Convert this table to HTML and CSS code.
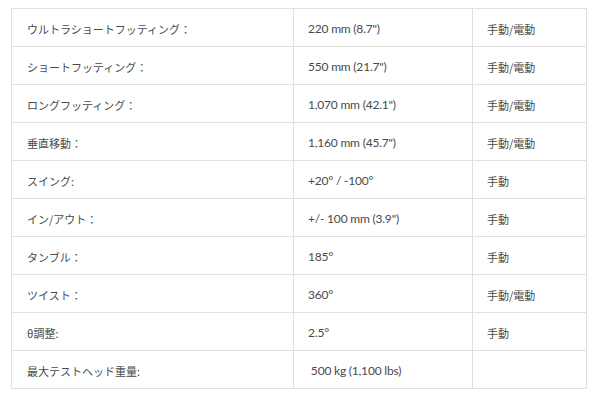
FILE: index.html
```html
<!DOCTYPE html>
<html lang="ja">
<head>
<meta charset="utf-8">
<link rel="stylesheet" href="styles.css">
</head>
<body>
<table class="spec">
  <tr><td class="label">ウルトラショートフッティング：</td><td class="val">220 mm (8.7")</td><td class="mode">手動/電動</td></tr>
  <tr><td class="label">ショートフッティング：</td><td class="val">550 mm (21.7")</td><td class="mode">手動/電動</td></tr>
  <tr><td class="label">ロングフッティング：</td><td class="val">1,070 mm (42.1")</td><td class="mode">手動/電動</td></tr>
  <tr><td class="label">垂直移動：</td><td class="val">1,160 mm (45.7")</td><td class="mode">手動/電動</td></tr>
  <tr><td class="label">スイング:</td><td class="val">+20° / -100°</td><td class="mode">手動</td></tr>
  <tr><td class="label">イン/アウト：</td><td class="val">+/- 100 mm (3.9")</td><td class="mode">手動</td></tr>
  <tr><td class="label">タンブル：</td><td class="val">185°</td><td class="mode">手動</td></tr>
  <tr><td class="label">ツイスト：</td><td class="val">360°</td><td class="mode">手動/電動</td></tr>
  <tr><td class="label">θ調整:</td><td class="val">2.5°</td><td class="mode">手動</td></tr>
  <tr><td class="label">最大テストヘッド重量:</td><td class="val">&nbsp;500 kg (1,100 lbs)</td><td class="mode"></td></tr>
</table>
</body>
</html>
```
FILE: styles.css
```css
html, body {
  background: #ffffff;
}
body {
  margin: 8px 0 0 11px;
  font-family: "Noto Sans CJK JP", "Noto Sans", sans-serif;
  color: #4a4a4a;
}
.spec {
  border-collapse: collapse;
  width: 575px;
  table-layout: fixed;
}
.spec td {
  border: 1px solid #e0e0e0;
  height: 38px;
  padding: 2px 0 0 15px;
  box-sizing: border-box;
  font-size: 11px;
  line-height: 16px;
  vertical-align: middle;
  white-space: nowrap;
}
.spec td.label {
  width: 282px;
}
.spec td.val {
  width: 179px;
  padding-left: 14px;
  font-family: "Lato", "Noto Sans CJK JP", sans-serif;
  font-size: 12px;
  letter-spacing: -0.2px;
}
.spec td.mode {
  width: 114px;
  padding-left: 14px;
}
```
